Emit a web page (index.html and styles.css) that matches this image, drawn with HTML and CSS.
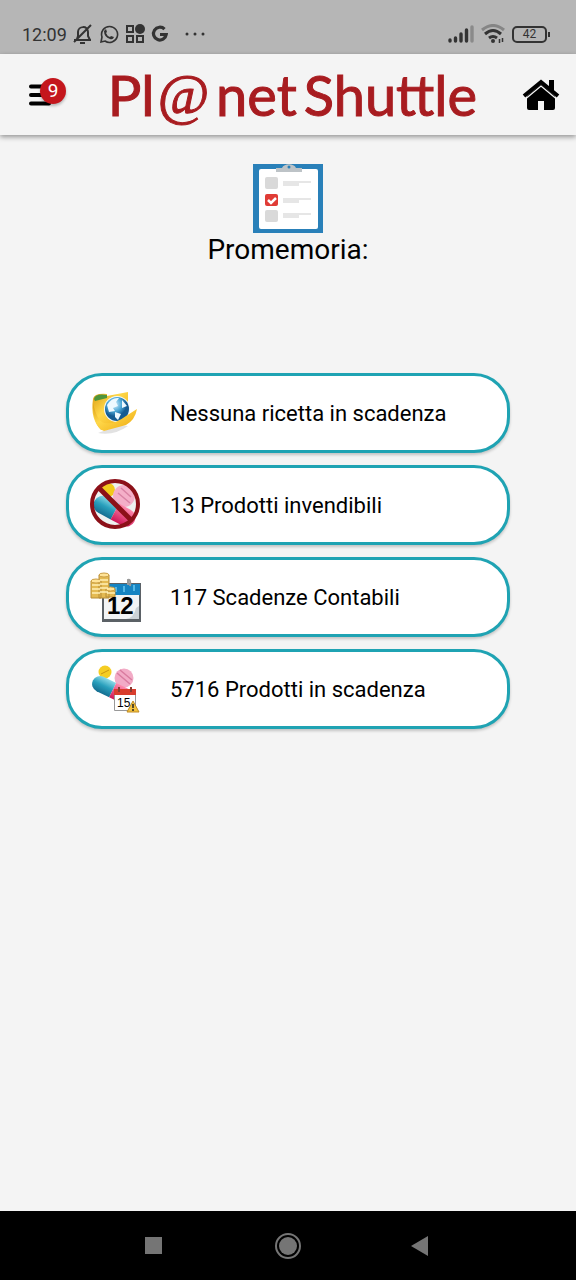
FILE: index.html
```html
<!DOCTYPE html>
<html lang="it">
<head>
<meta charset="utf-8">
<meta name="viewport" content="width=device-width, initial-scale=1">
<title>Pl@net Shuttle</title>
<link rel="stylesheet" href="styles.css">
</head>
<body>
<div class="status">
  <div class="status-left">
    <span class="clock">12:09</span>
    <svg width="20" height="22" viewBox="0 0 20 22" fill="none" stroke="#333" stroke-width="2"><path d="M1 17h17M4 16l1-3V9c0-6 10-7 10 0v4l2 4M1 19 18 2"/><path d="M7 20h5" stroke-width="2"/></svg>
    <svg width="20" height="20" viewBox="0 0 20 20" fill="none" stroke="#333" stroke-width="1.600"><path d="M2 18l1-5a8 8 0 1 1 3 4z"/><path d="M7 5l1 3-1 1q1 3 4 4l1-1 3 1q-1 3-4 2-6-2-6-8z" fill="#333" stroke="none"/></svg>
    <svg width="20" height="20" viewBox="0 0 20 20" fill="none" stroke="#333" stroke-width="2"><path d="M2 2h6v6H2zM2 12h6v6H2zM12 12h6v6h-6z"/><circle cx="15" cy="5" r="5" fill="#333" stroke="none"/></svg>
    <svg width="18" height="18" viewBox="0 0 18 18" fill="none" stroke="#333" stroke-width="3.200"><path d="M13.500 4.200A6.400 6.400 0 1 0 15.200 9.500H9"/></svg>
    <svg class="dots" width="20" height="6" viewBox="0 0 20 6" fill="#333"><circle cx="2" cy="3" r="1.500"/><circle cx="10" cy="3" r="1.500"/><circle cx="18" cy="3" r="1.500"/></svg>
  </div>
  <div class="status-right">
    <svg width="26" height="18" viewBox="0 0 26 18" stroke-width="3.400" stroke-linecap="round" stroke="#333"><path d="M2 16v-1M7.500 16v-3M13 16v-7M18.500 16V5"/><path d="M24 16V2" stroke="#8a8a8a"/></svg>
    <svg width="24" height="20" viewBox="0 0 24 20" fill="none" stroke="#333" stroke-width="3"><path d="M1 6q11-9 22 0" stroke="#858585"/><path d="M4 10q8-7 16 0M8 14q4-3 8 0"/><circle cx="12" cy="17" r="2" fill="#333" stroke="none"/><path d="M18.500 15v4M21.500 14v4" stroke-width="1.500"/></svg>
    <span class="battery">42</span>
  </div>
</div>
<header class="bar">
  <button class="menu" aria-label="Menu">
    <svg width="24" height="22" viewBox="0 0 24 22" stroke="#000" stroke-width="4" stroke-linecap="round"><path d="M4 2.500h18M4 11h18M4 19.500h18"/></svg>
    <span class="badge">9</span>
  </button>
  <div class="logo"><span>Pl</span><span class="at">@</span><span>net</span><span>Shuttle</span></div>
  <button class="home" aria-label="Home">
    <svg width="38" height="32" viewBox="0 0 38 32"><path d="M19 5 33 17V29q0 2-2 2H22V22H16v9H7q-2 0-2-2V17z"/><path d="M2 17 19 3 36 17" fill="none" stroke="#000" stroke-width="4"/><path d="M27 1h5v12l-5-4z"/><path d="M4 19.500 19 7 34 19.500" fill="none" stroke="#f4f4f4" stroke-width="1.300"/></svg>
  </button>
</header>
<main class="content">
  <svg class="clipboard" width="70" height="69" viewBox="0 0 70 69"><path fill="#2980b9" d="M0 0h70v69H0z"/><rect x="6" y="5" width="59" height="60" rx="2" fill="#fff"/><path fill="#bdc3c7" d="M23 8V4h6c2-5 12-5 14 0h6v4z"/><circle cx="36" cy="3" r="1.500" fill="#2980b9"/><g fill="#d9d9d9"><rect x="12" y="13" width="13" height="12" rx="2"/><rect x="12" y="46" width="13" height="12" rx="2"/></g><rect x="12" y="30" width="13" height="12" rx="2" fill="#e03c36"/><path d="M15 36l3 3 5-5" stroke="#fff" stroke-width="2.500" fill="none"/><g fill="#e6e6e6"><path d="M30 17h28v2H46v3H30zM30 34h28v2H46v3H30zM30 49h28v2H46v3H30z"/></g></svg>
  <h1 class="title">Promemoria:</h1>
  <div class="list">
    <button class="card">
      <svg width="52" height="52" viewBox="0 0 52 52"><defs><linearGradient id="fold" x2="1" y2="1"><stop stop-color="#d99a10"/><stop offset=".4" stop-color="#ffd84a"/><stop offset="1" stop-color="#eda70c"/></linearGradient><radialGradient id="globe" cx=".4" cy=".3"><stop stop-color="#d8f2ff"/><stop offset=".6" stop-color="#4ba6d5"/><stop offset="1" stop-color="#155b91"/></radialGradient></defs><path d="M8 46Q24 49 38 39L30 38z" fill="#e2e2e2"/><path d="M3 12q1-6 14-5v2l21-4v31L11 43Q0 32 3 12z" fill="url(#fold)"/><path d="M4 12q1-6 13-4v3L5 14z" fill="#4e953c"/><circle cx="27" cy="22" r="13" fill="#f4f9fb"/><circle cx="27" cy="22" r="12" fill="url(#globe)"/><path d="M17 18q5-8 12-7l-3 4 2 4-5 2 2 3-6 1zM32 13l5 6-5 2zM25 25l6 2-3 6-3-3z" fill="#eef9ff"/><path d="M3 16Q7 34 14 36 24 38 36 29L47 22Q45 33 36 38L14 44Q3 40 3 16z" fill="url(#fold)"/></svg>
      <span>Nessuna ricetta in scadenza</span>
    </button>
    <button class="card">
      <svg width="52" height="52" viewBox="0 0 52 52"><defs><linearGradient id="blue" x2="0" y2="1"><stop stop-color="#8edbe8"/><stop offset=".5" stop-color="#299fbc"/><stop offset="1" stop-color="#146e91"/></linearGradient><linearGradient id="pink" x2="0" y2="1"><stop stop-color="#ff8bad"/><stop offset="1" stop-color="#cf1657"/></linearGradient></defs><circle cx="25" cy="25" r="23" fill="#eef1f0"/><circle cx="18" cy="11" r="7" fill="#f2c91c"/><circle cx="34" cy="17" r="11" fill="#f4afc8"/><path d="M28 14l12 10M31 9l10 9" stroke="#d983a4" stroke-width="1.500"/><g transform="rotate(28 24 32)"><path d="M25 23H11a9 9 0 0 0 0 18h14z" fill="url(#blue)"/><path d="M25 23h13a9 9 0 0 1 0 18H25z" fill="url(#pink)"/></g><path d="M9 9 41 41" stroke="#8c1018" stroke-width="5"/><circle cx="25" cy="25" r="23" fill="none" stroke="#8c1018" stroke-width="4"/></svg>
      <span>13 Prodotti invendibili</span>
    </button>
    <button class="card">
      <svg width="52" height="52" viewBox="0 0 52 52"><path fill="#5b6166" d="M12 12h39v39H12z"/><path fill="#f2f4f5" d="M14 23h35v25H14z"/><path fill="#1584c2" d="M14 13h36v11H14z"/><path fill="#ccd3d7" d="M36 48q8-1 10-11l3-2v13z"/><path d="M26 16v5M34 15v6M44 14v6" stroke="#54b7e5" stroke-width="2"/><path d="M38 14V9q3-1 2 6" fill="none" stroke="#999" stroke-width="2"/><g fill="#e4ba52" stroke="#b88d36"><path d="M1 10h10v17H1zM9 4h10v23H9zM16 18h9v8h-9z"/></g><g fill="#ffe397" stroke="#c99d44"><ellipse cx="6" cy="10" rx="5" ry="2"/><ellipse cx="14" cy="4" rx="5" ry="2"/><ellipse cx="20.500" cy="18" rx="4.500" ry="2"/></g><path d="M2 14h8M2 18h8M2 22h8M10 9h8M10 13h8M10 17h8M10 21h8M17 22h8" stroke="#fff0b5" stroke-width="1.500"/><text class="day-large" x="17" y="43">12</text></svg>
      <span>117 Scadenze Contabili</span>
    </button>
    <button class="card">
      <svg width="52" height="52" viewBox="0 0 52 52"><circle cx="15" cy="9" r="6.500" fill="#f5cd23"/><path d="M11 11l8-4" stroke="#c99611"/><circle cx="34" cy="15" r="9.500" fill="#f2abc6"/><path d="M27 10l13 11M30 7l12 10" stroke="#d97b9f" stroke-width="1.500"/><g transform="rotate(26 20 28)"><path d="M22 18H8a8 8 0 0 0 0 16h14z" fill="url(#blue)"/><path d="M22 18h13v16H22z" fill="url(#pink)"/></g><path fill="#fff" stroke="#999" d="M24.500 27.500h21v20h-21z"/><path fill="#d83d2d" d="M24 26h22v6H24z"/><path d="M29 24v5M41 24v5" stroke="#873b32" stroke-width="2"/><text class="day-small" x="27" y="44">15</text><path d="M43 38 49 49H37z" fill="#f4c33e" stroke="#c18b22"/><path d="M43 41v4M43 46v2" stroke="#222" stroke-width="1.500"/></svg>
      <span>5716 Prodotti in scadenza</span>
    </button>
  </div>
</main>
<nav class="nav">
  <button aria-label="Recenti"><svg width="28" height="28" viewBox="0 0 28 28" fill="#757575"><path d="M6 5h17v17H6z"/></svg></button>
  <button aria-label="Home Android"><svg width="28" height="28" viewBox="0 0 28 28" fill="#757575"><circle cx="14" cy="14" r="9"/><circle cx="14" cy="14" r="12" fill="none" stroke="#757575" stroke-width="2"/></svg></button>
  <button aria-label="Indietro"><svg width="28" height="28" viewBox="0 0 28 28" fill="#757575"><path d="M20 4v20L3 14z"/></svg></button>
</nav>
</body>
</html>
```
FILE: styles.css
```css
* { box-sizing: border-box; }
body {
  margin: 0;
  min-height: 100vh;
  display: flex;
  flex-direction: column;
  background: #f4f4f4;
  color: #000;
  font-family: Roboto, "Liberation Sans", sans-serif;
}
button { border: 0; padding: 0; background: none; color: inherit; font: inherit; }
svg { display: block; flex: none; }
.status {
  height: 54px;
  padding: 14px 25px 0 22px;
  display: flex;
  justify-content: space-between;
  align-items: center;
  background: #b6b6b6;
  color: #333;
}
.status-left, .status-right { display: flex; align-items: center; gap: 7px; }
.status-left { gap: 6px; }
.clock { font-size: 18px; }
.dots { margin-left: 10px; }
.battery {
  position: relative;
  width: 35px;
  height: 17px;
  margin-right: 4px;
  border: 2px solid #333;
  border-radius: 5px;
  font-size: 12px;
  line-height: 13px;
  text-align: center;
}
.battery::after {
  content: "";
  position: absolute;
  right: -5px;
  top: 4px;
  width: 2px;
  height: 5px;
  background: #333;
}
.bar {
  height: 81px;
  padding: 0 16px 0 27px;
  display: flex;
  align-items: center;
  justify-content: space-between;
  box-shadow: 0 2px 5px #0006;
}
.menu { position: relative; width: 36px; }
.badge {
  position: absolute;
  left: 13px;
  top: -6px;
  width: 26px;
  height: 26px;
  border-radius: 50%;
  background: #c4161c;
  box-shadow: 0 2px 3px #0004;
  color: #fff;
  font-size: 19px;
  line-height: 26px;
  text-align: center;
}
.logo {
  display: flex;
  align-items: baseline;
  gap: 7px;
  color: #a81c20;
  font-family: Lato, sans-serif;
  font-size: 56px;
  line-height: 78px;
  -webkit-text-stroke: 1px #a81c20;
}
.at {
  align-self: center;
  margin-left: -4px;
  font-family: "Liberation Serif", serif;
  font-style: italic;
}
.content {
  flex: 1;
  padding: 29px 66px;
  display: flex;
  flex-direction: column;
  align-items: center;
}
.title { margin: 0 0 107px; font-size: 28px; line-height: 33px; font-weight: 400; }
.list { width: 100%; display: flex; flex-direction: column; gap: 12px; }
.card {
  min-height: 80px;
  padding: 0 21px;
  display: flex;
  align-items: center;
  gap: 28px;
  border: 3px solid #1fa3b3;
  border-radius: 36px;
  background: #fff;
  box-shadow: 0 2px 3px #0003;
  font-size: 22px;
  text-align: left;
}
.day-large { font: bold 24px "Liberation Sans", sans-serif; }
.day-small { font: 12px "Liberation Sans", sans-serif; }
.nav {
  height: 69px;
  padding: 0 140px 0 139px;
  display: flex;
  align-items: center;
  justify-content: space-between;
  background: #000;
}
```
